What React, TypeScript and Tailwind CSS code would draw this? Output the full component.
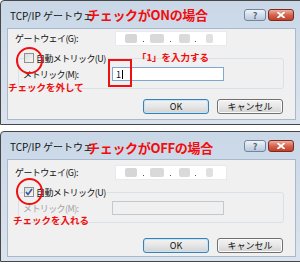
import React from "react";

const FONT = { fontFamily: '"Noto Sans CJK JP", "Noto Sans", sans-serif' };

function HelpBtn() {
  return (
    <div className="w-[22px] h-[12px] rounded-[3px] border border-[#7386a0] bg-gradient-to-b from-[#eef3f9] via-[#d3deea] to-[#b9c9dc] flex items-center justify-center">
      <span className="text-[9px] leading-none font-bold text-[#55647a]">?</span>
    </div>
  );
}

function CloseBtn() {
  return (
    <div className="w-[26px] h-[12px] rounded-[3px] border border-[#80291c] bg-gradient-to-b from-[#eab0a2] via-[#d4644e] to-[#c0402a] flex items-center justify-center">
      <svg width="8" height="6" viewBox="0 0 8 6">
        <path d="M1 0.5 L7 5.5 M7 0.5 L1 5.5" stroke="#ffffff" strokeWidth="1.8" strokeLinecap="round" />
      </svg>
    </div>
  );
}

function Checkbox({ checked }: { checked: boolean }) {
  return (
    <div className="w-[10px] h-[10px] border border-[#8e8f8f] bg-gradient-to-br from-[#dcdcdc] to-[#f6f6f6] flex items-center justify-center">
      {checked && (
        <svg width="8" height="8" viewBox="0 0 8 8">
          <path d="M1 4 L3 6.5 L7 1" stroke="#3d5596" strokeWidth="1.6" fill="none" />
        </svg>
      )}
    </div>
  );
}

function IpBox() {
  return (
    <div className="w-[112px] h-[15px] bg-white border border-[#e6e9ee] flex items-center pl-[9px]">
      <div className="w-[12px] h-[9px] bg-[#d6d6d6] rounded-[2px] blur-[0.6px]" />
      <div className="ml-[6px] w-[1px] h-[1px] mt-[6px] bg-[#555]" />
      <div className="ml-[6px] w-[14px] h-[9px] bg-[#d9d9d9] rounded-[2px] blur-[0.6px]" />
      <div className="ml-[6px] w-[1px] h-[1px] mt-[6px] bg-[#555]" />
      <div className="ml-[8px] w-[11px] h-[9px] bg-[#dadada] rounded-[2px] blur-[0.6px]" />
      <div className="ml-[5px] w-[1px] h-[1px] mt-[6px] bg-[#555]" />
      <div className="ml-[10px] w-[7px] h-[9px] bg-[#e0e0e0] rounded-[2px] blur-[0.6px]" />
    </div>
  );
}

function Btn({ label, def }: { label: string; def?: boolean }) {
  return (
    <div
      className={
        "w-[66px] h-[15px] rounded-[3px] border flex items-center justify-center text-[9px] leading-none text-[#111] bg-gradient-to-b from-[#f3f3f3] via-[#e6e6e6] to-[#d2d2d2] " +
        (def ? "border-[#3c7fb1] shadow-[inset_0_0_0_1px_#bfe6fb]" : "border-[#707070] shadow-[inset_0_0_0_1px_#fbfbfb]")
      }
    >
      {label}
    </div>
  );
}

function Dialog({
  checked,
  title,
  note,
  height,
  shift,
}: {
  checked: boolean;
  title: string;
  note: string;
  height: string;
  shift: boolean;
}) {
  return (
    <div className={"relative w-[303px] border border-[#474747] rounded-tl-[4px] bg-gradient-to-b from-[#c9d7e7] to-[#dbe4ee] flex flex-col pl-[6px] pr-[6px] pb-[4px] " + height}>
      <div className="h-[27px] flex items-center pl-[3px] pr-[1px] pt-[1px]">
        <span className="text-[10px] text-[#111]">TCP/IP ゲートウェ</span>
        <div className="flex-1" />
        <div className="flex gap-[2px] mr-[1px]">
          <HelpBtn />
          <CloseBtn />
        </div>
      </div>
      <div className={"flex-1 bg-[#f0f0f0] border border-[#a9b8ca] flex flex-col pl-[7px] text-[9px] leading-none text-[#111] " + (shift ? "pt-[5px]" : "pt-[2px]")}>
        <div className="flex items-center">
          <span className="w-[100px] tracking-[-0.6px]">ゲートウェイ(G):</span>
          <IpBox />
        </div>
        <div className="mt-[12px] ml-[3px] w-[266px] h-[31px] border border-[#d8e0e8] rounded-[3px] flex flex-col">
          <div className="-mt-[6px] ml-[5px] flex items-center gap-[2px] bg-[#f0f0f0] w-fit pr-[1px]">
            <Checkbox checked={checked} />
            <span className="tracking-[-0.6px]">自動メトリック(U)</span>
          </div>
          <div className="mt-[4px] flex items-center">
            <span className={"w-[93px] pl-[4px] tracking-[-0.6px] " + (checked ? "text-[#a3a3a3]" : "")}>メトリック(M):</span>
            {checked ? (
              <div className="w-[112px] h-[14px] border border-[#c2c8cf] bg-[#f0f0f0]" />
            ) : (
              <div className="w-[112px] h-[14px] border border-[#7fa8cf] bg-white flex items-center pl-[3px]">
                <span className="text-[9px]">1</span>
                <div className="w-[1px] h-[9px] bg-black ml-[1px]" />
              </div>
            )}
          </div>
        </div>
        <div className={"flex justify-end gap-[8px] pr-[12px] " + (shift ? "mt-[15px]" : "mt-[10px]")}>
          <Btn label="OK" def />
          <Btn label="キャンセル" />
        </div>
      </div>

      {/* annotations */}
      <span className={"absolute left-[86px] text-[13px] leading-none font-bold text-[#f20c0c] tracking-[-0.3px] " + (shift ? "top-[9px]" : "top-[7px]")}>{title}</span>
      <div className="absolute left-[15px] top-[46px] w-[27px] h-[27px] rounded-full border-2 border-[#f01010]" />
      {!checked && (
        <>
          <div className="absolute left-[107px] top-[58px] w-[24px] h-[28px] border-2 border-[#f01010]" />
          <span className="absolute left-[136px] top-[52px] text-[9.5px] leading-none font-bold text-[#f20c0c]">「1」を入力する</span>
        </>
      )}
      <span className={"absolute text-[9.5px] leading-none font-bold text-[#f20c0c] " + (shift ? "left-[12px] top-[84px]" : "left-[7px] top-[82px]")}>{note}</span>
    </div>
  );
}

export default function App() {
  return (
    <div className="w-[300px] h-[265px] bg-white overflow-hidden flex flex-col gap-[6px]" style={FONT}>
      <Dialog checked={false} title="チェックがONの場合" note="チェックを外して" height="h-[125px]" shift={false} />
      <Dialog checked={true} title="チェックがOFFの場合" note="チェックを入れる" height="h-[131px]" shift={true} />
    </div>
  );
}
